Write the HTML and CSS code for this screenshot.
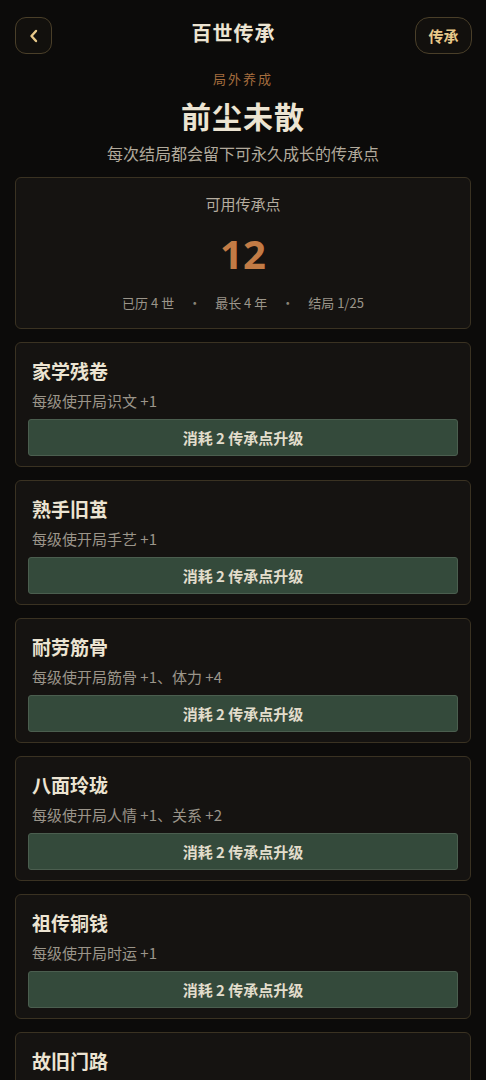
FILE: index.html
```html
<!DOCTYPE html>
<html lang="zh">
<head>
<meta charset="utf-8">
<link rel="stylesheet" href="styles.css">
</head>
<body>
<div class="page">
  <header class="topbar">
    <button class="back-btn" aria-label="返回">
      <svg width="12" height="14" viewBox="0 0 12 14"><path d="M8 2 L3.5 7 L8 12" fill="none" stroke="#e8c98a" stroke-width="2.4" stroke-linecap="round" stroke-linejoin="round"/></svg>
    </button>
    <h1 class="top-title">百世传承</h1>
    <button class="pill-btn">传承</button>
  </header>

  <section class="hero">
    <div class="eyebrow">局外养成</div>
    <h2 class="hero-title">前尘未散</h2>
    <p class="hero-sub">每次结局都会留下可永久成长的传承点</p>
  </section>

  <section class="stats-card">
    <div class="stats-label">可用传承点</div>
    <div class="stats-num">12</div>
    <div class="stats-row">
      <span>已历 4 世</span><span class="dot">·</span><span>最长 4 年</span><span class="dot">·</span><span>结局 1/25</span>
    </div>
  </section>

  <section class="card">
    <div class="card-title">家学残卷</div>
    <div class="card-desc">每级使开局识文 +1</div>
    <button class="up-btn">消耗 2 传承点升级</button>
  </section>
  <section class="card">
    <div class="card-title">熟手旧茧</div>
    <div class="card-desc">每级使开局手艺 +1</div>
    <button class="up-btn">消耗 2 传承点升级</button>
  </section>
  <section class="card">
    <div class="card-title">耐劳筋骨</div>
    <div class="card-desc">每级使开局筋骨 +1、体力 +4</div>
    <button class="up-btn">消耗 2 传承点升级</button>
  </section>
  <section class="card">
    <div class="card-title">八面玲珑</div>
    <div class="card-desc">每级使开局人情 +1、关系 +2</div>
    <button class="up-btn">消耗 2 传承点升级</button>
  </section>
  <section class="card">
    <div class="card-title">祖传铜钱</div>
    <div class="card-desc">每级使开局时运 +1</div>
    <button class="up-btn">消耗 2 传承点升级</button>
  </section>
  <section class="card">
    <div class="card-title">故旧门路</div>
    <div class="card-desc">每级使开局关系 +2</div>
    <button class="up-btn">消耗 2 传承点升级</button>
  </section>
</div>
</body>
</html>
```

FILE: styles.css
```css
* { box-sizing: border-box; }
html, body {
  margin: 0;
  padding: 0;
  background: #0c0b0a;
}
body {
  font-family: "Noto Sans CJK SC", "Noto Sans", sans-serif;
  color: #ece4d2;
  overflow: hidden;
  height: 1080px;
}
.page {
  padding: 17px 15px 0 15px;
  display: flex;
  flex-direction: column;
}
.topbar {
  display: flex;
  align-items: center;
  justify-content: space-between;
  height: 37px;
}
.back-btn {
  width: 37px;
  height: 37px;
  border: 1px solid #4a3f29;
  border-radius: 11px;
  background: #12100d;
  display: flex;
  align-items: center;
  justify-content: center;
  padding: 0;
}
.top-title {
  margin: 0 0 6px 0;
  font-size: 20px;
  font-weight: 700;
  color: #ece4d2;
  line-height: 1;
  letter-spacing: 1px;
}
.pill-btn {
  width: 57px;
  height: 37px;
  margin-right: -1px;
  border: 1px solid #4a3f29;
  border-radius: 14px;
  background: #12100d;
  color: #e8c98a;
  font-family: inherit;
  font-size: 15px;
  font-weight: 700;
  padding: 0;
}
.hero {
  display: flex;
  flex-direction: column;
  align-items: center;
  margin-top: 15px;
}
.eyebrow {
  font-size: 13px;
  color: #a46d3e;
  letter-spacing: 2px;
  line-height: 20px;
}
.hero-title {
  margin: 8px 0 0 0;
  font-size: 30px;
  font-weight: 700;
  line-height: 36px;
  letter-spacing: 1px;
  color: #ece4d2;
}
.hero-sub {
  margin: 9px 0 0 0;
  font-size: 16px;
  color: #b2aa9c;
  line-height: 22px;
}
.stats-card {
  margin-top: 13px;
  height: 152px;
  border: 1px solid #3a3222;
  border-radius: 6px;
  background: #151311;
  display: flex;
  flex-direction: column;
  align-items: center;
  padding-top: 15px;
}
.stats-label {
  font-size: 15px;
  color: #b5ada0;
  line-height: 22px;
}
.stats-num {
  font-size: 40px;
  font-weight: 700;
  color: #c27b45;
  line-height: 48px;
  margin-top: 15px;
  font-family: "Noto Sans", "Noto Sans CJK SC", sans-serif;
}
.stats-row {
  margin-top: 15px;
  font-size: 13px;
  color: #9b958a;
  line-height: 20px;
  display: flex;
  gap: 14px;
}
.stats-row .dot { color: #8a8478; }
.card {
  margin-top: 13px;
  height: 125px;
  border: 1px solid #3a3222;
  border-radius: 6px;
  background: #151311;
  padding: 15px 12px 12px 12px;
  display: flex;
  flex-direction: column;
}
.card-title {
  padding-left: 4px;
  font-size: 19px;
  font-weight: 700;
  color: #ece4d2;
  line-height: 26px;
}
.card-desc {
  padding-left: 4px;
  margin-top: 7px;
  font-size: 15px;
  color: #9b958a;
  line-height: 20px;
}
.up-btn {
  margin-top: 8px;
  height: 37px;
  width: 100%;
  background: #344a3b;
  border: 1px solid #4b5e4f;
  border-radius: 3px;
  color: #e2ddcc;
  font-family: inherit;
  font-size: 15px;
  font-weight: 700;
  padding: 0;
  flex-shrink: 0;
}
```
